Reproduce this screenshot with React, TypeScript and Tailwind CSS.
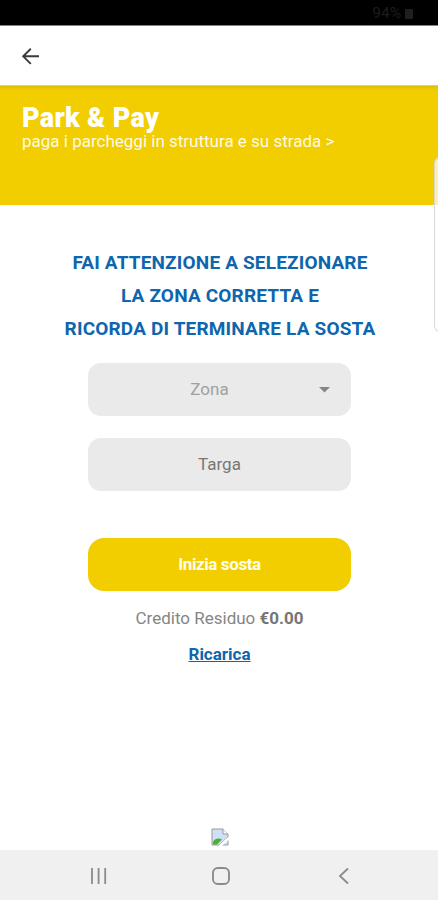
import React from "react";

function StatusBar() {
  return (
    <div className="flex h-[26px] shrink-0 items-center justify-end border-b border-[#858282] bg-black pr-[25px] pt-[3px]">
      <span className="text-[15.500px] leading-none text-[#1c1c1c]">94%</span>
      <span className="ml-[4px] h-[10px] w-[8px] rounded-[1px] bg-[#1f1f1f]" />
    </div>
  );
}

function TopBar() {
  return (
    <header className="flex h-[59px] shrink-0 items-center bg-white pl-[21px]">
      <button aria-label="Indietro">
        <svg width="19" height="18" viewBox="0 0 19 18" fill="none" stroke="#3a3a3a" strokeWidth="1.9">
          <path d="M18 9.3H2M9.8 1.8L2.2 9.3l7.6 7.6" />
        </svg>
      </button>
    </header>
  );
}

function Banner() {
  return (
    <section className="h-[120px] shrink-0 border-t border-[#e6cf6a] bg-[#f2cd00] bg-linear-to-b from-[#e3bf06] to-[#f2cd00] to-[5px] pl-[22px] pt-[17px] text-white">
      <h1 className="text-[27px] leading-[30px] font-black tracking-[0.32px]">Park &amp; Pay</h1>
      <p className="-mt-[2px] text-[17px] leading-[20px] text-[#fffbe2]">paga i parcheggi in struttura e su strada &gt;</p>
    </section>
  );
}

function NavBar() {
  return (
    <nav className="flex h-[50px] shrink-0 items-center bg-[#f0f0f0] pl-[90px] pt-[2px]">
      <svg width="17" height="16" viewBox="0 0 17 16" stroke="#8b8b8b" strokeWidth="1.8">
        <path d="M2 0v16M8.6 0v16M15.2 0v16" />
      </svg>
      <svg className="ml-[104px]" width="20" height="20" viewBox="0 0 20 20" fill="none" stroke="#8b8b8b" strokeWidth="1.9">
        <rect x="2" y="2" width="16" height="16" rx="4.8" />
      </svg>
      <svg className="ml-[107px]" width="12" height="18" viewBox="0 0 12 18" fill="none" stroke="#8b8b8b" strokeWidth="1.8">
        <path d="M10 1.5L2 9l8 7.5" />
      </svg>
    </nav>
  );
}

export default function App() {
  return (
    <div className="relative flex h-[900px] w-[438px] flex-col overflow-hidden bg-white font-[Roboto,sans-serif]">
      <StatusBar />
      <TopBar />
      <Banner />
      <main className="flex flex-1 flex-col items-center pt-[41px]">
        <h2 className="w-full pl-[2px] text-center text-[19px] leading-[33px] font-bold tracking-[0.17px] whitespace-nowrap text-[#0e66ae]">
          FAI ATTENZIONE A SELEZIONARE
          <br />
          LA ZONA CORRETTA E
          <br />
          RICORDA DI TERMINARE LA SOSTA
        </h2>
        <button className="mt-[18px] flex h-[53px] w-[263px] items-center rounded-[13px] bg-[#eaeaea] pr-[21px] text-[17px] text-[#a0a0a0]">
          <span className="flex-1 pl-[13px] text-center">Zona</span>
          <svg width="11" height="6" viewBox="0 0 11 6" fill="#858585">
            <path d="M0 0h11L5.500 5.500z" />
          </svg>
        </button>
        <div className="mt-[22px] flex h-[53px] w-[263px] items-center justify-center rounded-[13px] bg-[#eaeaea] pl-[1px] text-[17px] text-[#777]">
          Targa
        </div>
        <button className="mt-[47px] h-[53px] w-[263px] rounded-[16px] bg-[#f2cd00] pl-[1px] text-[17px] font-bold tracking-[-0.4px] text-[#fffdf0]">
          Inizia sosta
        </button>
        <p className="mt-[17px] pl-[1px] text-[17px] leading-[20px] text-[#858585]">
          Credito Residuo <b className="text-[#757575]">€0.00</b>
        </p>
        <a className="mt-[16px] pl-[1px] text-[17px] leading-[20px] font-bold text-[#0e66ae] underline" href="#">
          Ricarica
        </a>
        <svg className="mt-auto ml-[2px] mb-[4px]" width="18" height="18" viewBox="0 0 18 18">
          <path d="M1 1h11l5 5v3L8 17H1z" fill="#cfe0f6" stroke="#999" />
          <path d="M12 1v5h5" fill="#fff" stroke="#999" />
          <path d="M2 16.500V13.500c2-3 6-4 9-2l-5 5z" fill="#4caf32" />
          <path d="M11.500 17H17v-5z" fill="#dde6f0" stroke="#999" />
          <path d="M9 18L18 10" stroke="#fff" strokeWidth="2.500" />
        </svg>
      </main>
      <NavBar />
      <div className="absolute top-[157px] left-[434px] h-[175px] w-[12px] rounded-[7px] border border-[#cfcfcf]/80 bg-white/70" />
    </div>
  );
}
